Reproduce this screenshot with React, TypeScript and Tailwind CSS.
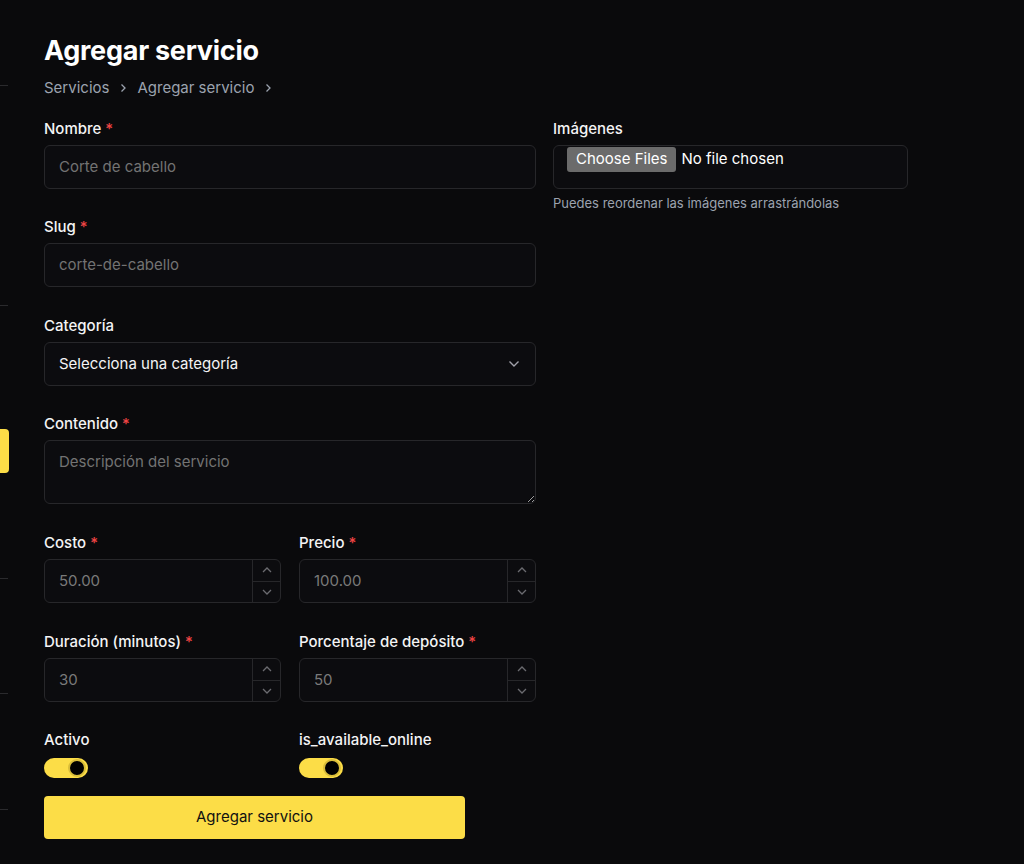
import React from 'react';

const FONT = { fontFamily: 'Inter, "Noto Sans", sans-serif' };

function Req() {
  return <span className="ml-1 text-[#ef4444]">*</span>;
}

function Label({ text, required }: { text: string; required?: boolean }) {
  return (
    <div className="mb-[6px] flex h-5 items-center text-[15px] font-medium text-[#f4f4f5]">
      {text}
      {required && <Req />}
    </div>
  );
}

function TextField({ placeholder }: { placeholder: string }) {
  return (
    <div className="flex h-[44px] items-center rounded-md border border-[#27272a] bg-[#0c0c0f] px-[14px] text-[15px] text-[#737373]">
      {placeholder}
    </div>
  );
}

function Chevron({ up }: { up?: boolean }) {
  return (
    <svg width="10" height="6" viewBox="0 0 10 6" fill="none" stroke="#6b6b70" strokeWidth="1.3">
      {up ? <path d="M1 5l4-4 4 4" /> : <path d="M1 1l4 4 4-4" />}
    </svg>
  );
}

function NumberField({ value }: { value: string }) {
  return (
    <div className="flex h-[44px] rounded-md border border-[#27272a] bg-[#0c0c0f]">
      <div className="flex flex-1 items-center px-[14px] text-[15px] text-[#7a7a7a]">{value}</div>
      <div className="flex w-[28px] flex-col border-l border-[#27272a]">
        <div className="flex flex-1 items-center justify-center border-b border-[#27272a]">
          <Chevron up />
        </div>
        <div className="flex flex-1 items-center justify-center">
          <Chevron />
        </div>
      </div>
    </div>
  );
}

function Toggle() {
  return (
    <div className="flex h-5 w-[44px] items-center justify-end rounded-full bg-[#fcdd47] px-[2px]">
      <div className="h-[18px] w-[18px] rounded-full border-2 border-[#d9bd3a] bg-black" />
    </div>
  );
}

export default function App() {
  const lines = [85, 305, 578, 693, 809];
  return (
    <div className="relative min-h-[864px] w-full overflow-hidden bg-[#0a0a0c]" style={FONT}>
      {/* sidebar remnant at left edge */}
      {lines.map((y) => (
        <div key={y} className="absolute left-0 h-px w-2 bg-[#2a2a2d]" style={{ top: y }} />
      ))}
      <div className="absolute left-0 top-[429px] h-[44px] w-[9px] rounded-r-[4px] bg-[#fcdd47]" />

      <div className="px-[44px] pt-[34px]">
        <h1 className="text-[27px] font-bold leading-[34px] tracking-[-0.01em] text-white">Agregar servicio</h1>
        <div className="mt-[8px] flex h-6 items-center gap-[10px] text-[15px] text-[#9ca3af]">
          <span>Servicios</span>
          <svg width="8" height="10" viewBox="0 0 8 10" fill="none" stroke="#9ca3af" strokeWidth="1.3">
            <path d="M2.5 1.5l3.5 3.5-3.5 3.5" />
          </svg>
          <span>Agregar servicio</span>
          <svg width="8" height="10" viewBox="0 0 8 10" fill="none" stroke="#9ca3af" strokeWidth="1.3">
            <path d="M2.5 1.5l3.5 3.5-3.5 3.5" />
          </svg>
        </div>

        <div className="mt-[19px] flex gap-[17px]">
          {/* left column */}
          <div className="flex w-[492px] flex-col">
            <Label text="Nombre" required />
            <TextField placeholder="Corte de cabello" />

            <div className="mt-[28px]">
              <Label text="Slug" required />
              <TextField placeholder="corte-de-cabello" />
            </div>

            <div className="mt-[29px]">
              <Label text="Categoría" />
              <div className="flex h-[44px] items-center justify-between rounded-md border border-[#27272a] bg-[#0c0c0f] pl-[14px] pr-[15px] text-[15px] text-[#f4f4f5]">
                <span>Selecciona una categoría</span>
                <svg width="12" height="8" viewBox="0 0 12 8" fill="none" stroke="#a1a1aa" strokeWidth="1.4">
                  <path d="M1.5 1.5l4.5 4.5 4.5-4.5" />
                </svg>
              </div>
            </div>

            <div className="mt-[28px]">
              <Label text="Contenido" required />
              <textarea
                placeholder="Descripción del servicio"
                className="block h-[64px] w-full rounded-md border border-[#27272a] bg-[#0c0c0f] px-[14px] pt-[11px] pb-[9px] text-[15px] leading-[20px] text-[#f4f4f5] outline-none placeholder:text-[#737373]"
                style={FONT}
              />
            </div>

            <div className="mt-[29px] grid grid-cols-2 gap-[18px]">
              <div>
                <Label text="Costo" required />
                <NumberField value="50.00" />
              </div>
              <div>
                <Label text="Precio" required />
                <NumberField value="100.00" />
              </div>
            </div>

            <div className="mt-[29px] grid grid-cols-2 gap-[18px]">
              <div>
                <Label text="Duración (minutos)" required />
                <NumberField value="30" />
              </div>
              <div>
                <Label text="Porcentaje de depósito" required />
                <NumberField value="50" />
              </div>
            </div>

            <div className="mt-[28px] grid grid-cols-2 gap-[18px]">
              <div>
                <div className="mb-[8px] flex h-5 items-center text-[15px] font-medium text-[#f4f4f5]">Activo</div>
                <Toggle />
              </div>
              <div>
                <div className="mb-[8px] flex h-5 items-center text-[15px] font-medium text-[#f4f4f5]">is_available_online</div>
                <Toggle />
              </div>
            </div>

            <button className="mt-[18px] flex h-[43px] w-[421px] items-center justify-center rounded-[4px] bg-[#fcdd47] text-[15px] text-[#111111]">
              Agregar servicio
            </button>
          </div>

          {/* right column */}
          <div className="flex w-[355px] flex-col">
            <Label text="Imágenes" />
            <div className="flex h-[44px] items-start rounded-md border border-[#27272a] bg-[#0c0c0f] pl-[13px] pt-[1px]">
              <span className="flex h-[25px] items-center rounded-[3px] bg-[#6b6b6b] px-[9px] text-[15px] text-white">
                Choose Files
              </span>
              <span className="ml-[5px] flex h-[25px] items-center text-[15px] text-white">No file chosen</span>
            </div>
            <div className="mt-[5px] text-[13px] text-[#9ca3af]">Puedes reordenar las imágenes arrastrándolas</div>
          </div>
        </div>
      </div>
    </div>
  );
}
